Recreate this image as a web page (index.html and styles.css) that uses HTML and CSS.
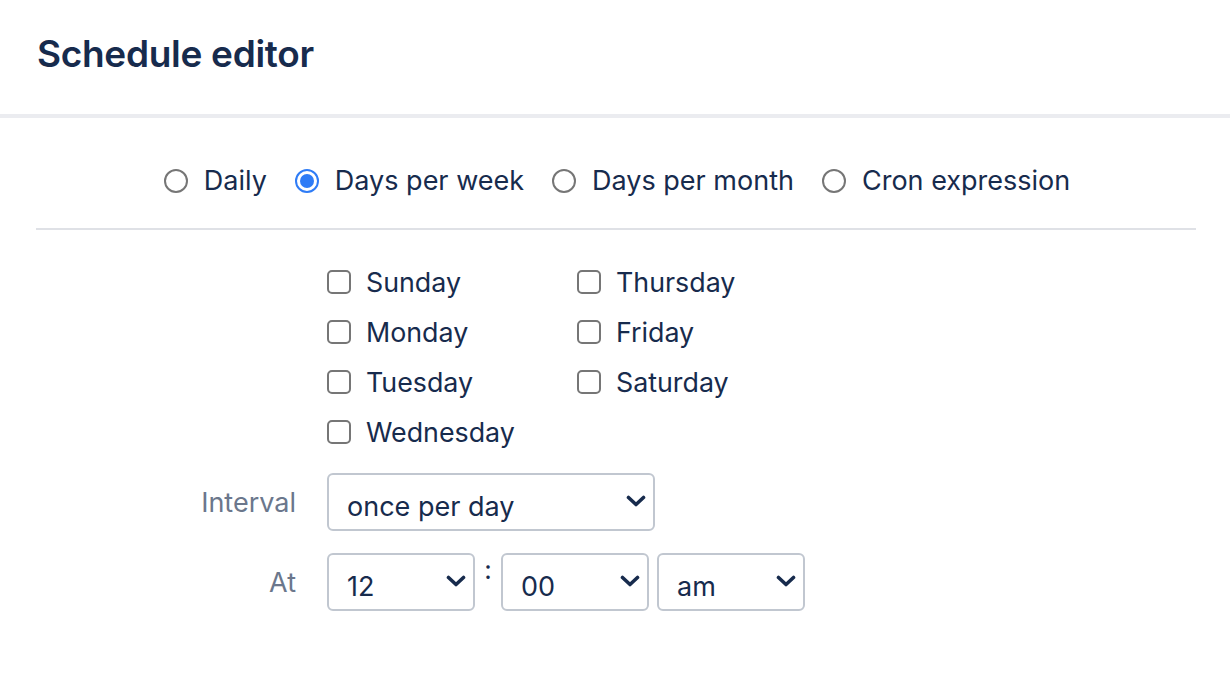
FILE: index.html
```html
<!DOCTYPE html>
<html>
<head>
<meta charset="utf-8">
<link rel="stylesheet" href="styles.css">
</head>
<body>
<header class="header">
  <h1 class="title">Schedule editor</h1>
</header>
<main class="content">
  <div class="modes">
    <label class="mode"><span class="radio"></span><span>Daily</span></label>
    <label class="mode"><span class="radio checked"></span><span>Days per week</span></label>
    <label class="mode"><span class="radio"></span><span>Days per month</span></label>
    <label class="mode"><span class="radio"></span><span>Cron expression</span></label>
  </div>
  <div class="form">
    <div class="days">
      <label class="day"><span class="box"></span>Sunday</label>
      <label class="day"><span class="box"></span>Thursday</label>
      <label class="day"><span class="box"></span>Monday</label>
      <label class="day"><span class="box"></span>Friday</label>
      <label class="day"><span class="box"></span>Tuesday</label>
      <label class="day"><span class="box"></span>Saturday</label>
      <label class="day"><span class="box"></span>Wednesday</label>
    </div>
    <div class="row interval-row">
      <div class="label">Interval</div>
      <div class="select wide"><span class="value">once per day</span>
        <svg class="chev" viewBox="0 0 20 12" width="20" height="12"><path d="M2.5 2.5 L10 9.5 L17.5 2.5" fill="none" stroke="#172b4d" stroke-width="3.6" stroke-linecap="round" stroke-linejoin="round"/></svg>
      </div>
    </div>
    <div class="row at-row">
      <div class="label">At</div>
      <div class="time">
        <div class="select small"><span class="value">12</span>
          <svg class="chev" viewBox="0 0 20 12" width="20" height="12"><path d="M2.5 2.5 L10 9.5 L17.5 2.5" fill="none" stroke="#172b4d" stroke-width="3.6" stroke-linecap="round" stroke-linejoin="round"/></svg>
        </div>
        <span class="colon">:</span>
        <div class="select small"><span class="value">00</span>
          <svg class="chev" viewBox="0 0 20 12" width="20" height="12"><path d="M2.5 2.5 L10 9.5 L17.5 2.5" fill="none" stroke="#172b4d" stroke-width="3.6" stroke-linecap="round" stroke-linejoin="round"/></svg>
        </div>
        <div class="select small ampm"><span class="value">am</span>
          <svg class="chev" viewBox="0 0 20 12" width="20" height="12"><path d="M2.5 2.5 L10 9.5 L17.5 2.5" fill="none" stroke="#172b4d" stroke-width="3.6" stroke-linecap="round" stroke-linejoin="round"/></svg>
        </div>
      </div>
    </div>
  </div>
</main>
</body>
</html>
```

FILE: styles.css
```css
* { box-sizing: border-box; }
html, body { margin: 0; padding: 0; background: #fff; }
body {
  font-family: Inter, "Noto Sans", "Liberation Sans", sans-serif;
  color: #172b4d;
  width: 1230px;
  height: 678px;
  overflow: hidden;
}
.header {
  height: 118px;
  border-bottom: 4px solid #ebecf0;
  padding: 30px 37px 0;
}
.title {
  margin: 0;
  font-size: 37px;
  line-height: 48px;
  font-weight: 600;
  letter-spacing: -0.3px;
}
.content {
  padding: 0 34px 0 36px;
}
.modes {
  display: flex;
  justify-content: center;
  gap: 28px;
  padding: 45px 0 29px 2px;
  border-bottom: 2px solid #dfe1e6;
  font-size: 27px;
  line-height: 36px;
}
.mode {
  display: flex;
  align-items: center;
  gap: 16px;
}
.radio {
  width: 24px;
  height: 24px;
  border-radius: 50%;
  border: 2px solid #767676;
  position: relative;
  flex: none;
}
.radio.checked {
  border: 2px solid #2f7cf6;
}
.radio.checked::after {
  content: "";
  position: absolute;
  left: 3px; top: 3px;
  width: 14px; height: 14px;
  border-radius: 50%;
  background: #2f7cf6;
}
.form {
  padding-top: 27px;
}
.days {
  margin-left: 291px;
  display: grid;
  grid-template-columns: 250px 250px;
  grid-auto-rows: 50px;
  font-size: 26.8px;
}
.day {
  display: flex;
  align-items: center;
  gap: 15px;
}
.box {
  width: 24px;
  height: 24px;
  border: 2px solid #767676;
  border-radius: 5px;
  flex: none;
}
.row {
  display: grid;
  grid-template-columns: 260px auto;
  column-gap: 31px;
  align-items: center;
}
.interval-row { margin-top: 16px; }
.at-row { margin-top: 22px; }
.label {
  text-align: right;
  color: #6b778c;
  font-size: 27px;
}
.select {
  position: relative;
  height: 58px;
  border: 2px solid #c1c7d0;
  border-radius: 6px;
  display: flex;
  align-items: center;
  padding: 8px 0 0 18px;
  font-size: 27px;
  background: #fff;
}
.select.wide { width: 328px; }
.select.small { width: 148px; }
.select.ampm { width: 148px; margin-left: 8px; }
.chev {
  position: absolute;
  right: 7px;
  top: 20px;
}
.time {
  display: flex;
  align-items: flex-start;
}
.colon {
  width: 26px;
  text-align: center;
  font-size: 26px;
  line-height: 26px;
  padding-top: 4px;
}
```
